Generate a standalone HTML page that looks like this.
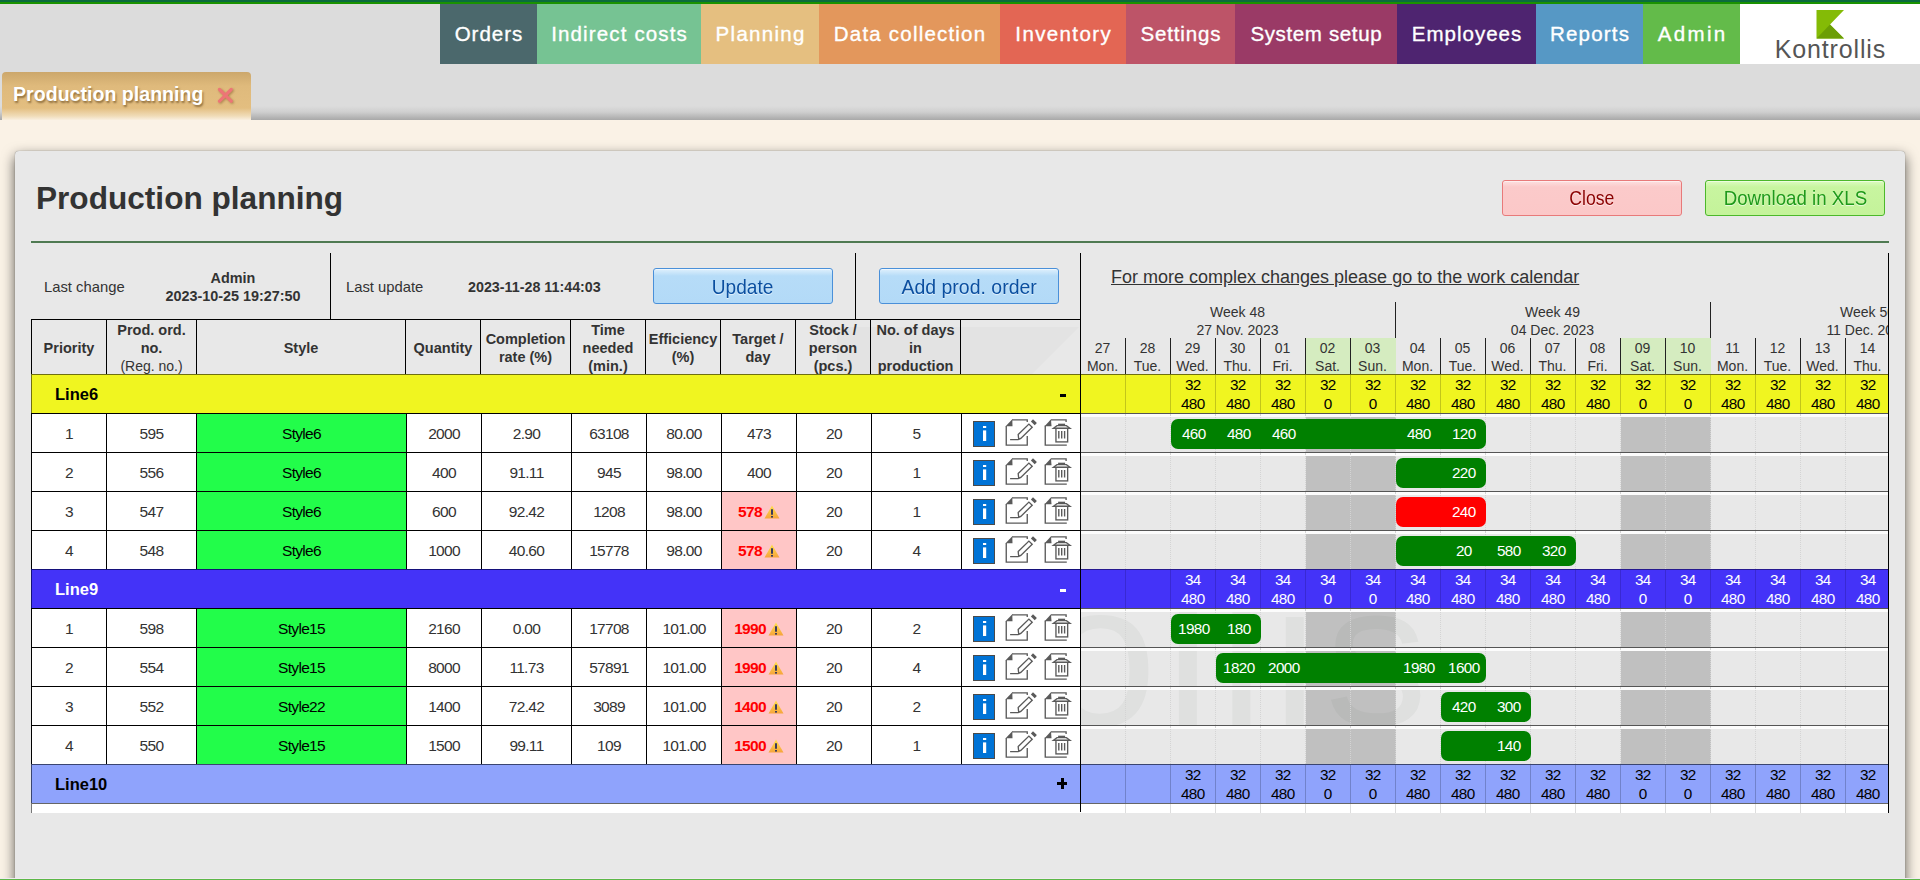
<!DOCTYPE html><html><head><meta charset="utf-8"><style>
*{margin:0;padding:0;box-sizing:border-box}
html,body{width:1920px;height:880px;overflow:hidden;background:#faf2e6;font-family:"Liberation Sans", sans-serif;color:#333}
.a{position:absolute}
.mi{position:absolute;top:4px;height:60px;color:#fff;font-size:20.5px;line-height:60px;-webkit-text-stroke:0.35px #fff;text-align:center;white-space:nowrap}
.hc{position:absolute;text-align:center;font-weight:bold;font-size:14.5px;line-height:18px;color:#333;white-space:nowrap}
.c{position:absolute;text-align:center;font-size:15.5px;letter-spacing:-0.7px;color:#333;white-space:nowrap}
.vl{position:absolute;width:1px;background:#000}
.hl{position:absolute;height:1px;background:#000}
.cal{position:absolute;text-align:center;font-size:14px;line-height:19px;white-space:nowrap}
.bar{position:absolute;height:30px;border-radius:7px;background:#008000}
.bn{position:absolute;top:0;width:45px;text-align:center;color:#fff;font-size:15.3px;letter-spacing:-0.6px;padding-left:0.6px;line-height:30px}
.ln{position:absolute;text-align:center;font-size:15.3px;letter-spacing:-0.6px;padding-left:0.6px;line-height:19px;white-space:nowrap}
</style></head><body>

<div class="a" style="left:0;top:0;width:1920px;height:120px;background:linear-gradient(#dcdcdc 0,#dcdcdc 106px,#cfcfcf 112px,#a8a8a8 120px)"></div>
<div class="a" style="left:0;top:0;width:1920px;height:4px;background:linear-gradient(#0b6a3e 0,#0b6a3e 1.5px,#1a9200 2.5px,#1a9200 4px)"></div>
<div class="mi" style="left:440px;width:97px;background:#4b686c;letter-spacing:1.0px;padding-left:1.0px">Orders</div>
<div class="mi" style="left:537px;width:164px;background:#76c393;letter-spacing:1.15px;padding-left:1.15px">Indirect costs</div>
<div class="mi" style="left:701px;width:118px;background:#e5bf80;letter-spacing:1.29px;padding-left:1.29px">Planning</div>
<div class="mi" style="left:819px;width:181px;background:#e3975c;letter-spacing:1.2px;padding-left:1.2px">Data collection</div>
<div class="mi" style="left:1000px;width:126px;background:#e36654;letter-spacing:1.37px;padding-left:1.37px">Inventory</div>
<div class="mi" style="left:1126px;width:109px;background:#bd5468;letter-spacing:0.86px;padding-left:0.86px">Settings</div>
<div class="mi" style="left:1235px;width:162px;background:#9a3a66;letter-spacing:0.64px;padding-left:0.64px">System setup</div>
<div class="mi" style="left:1397px;width:139px;background:#4e2470;letter-spacing:1.0px;padding-left:1.0px">Employees</div>
<div class="mi" style="left:1536px;width:107px;background:#5698c5;letter-spacing:1.17px;padding-left:1.17px">Reports</div>
<div class="mi" style="left:1643px;width:97px;background:#63bb4a;letter-spacing:2.35px;padding-left:2.35px">Admin</div>
<div class="a" style="left:1740px;top:4px;width:180px;height:60px;background:#fff"></div>
<svg class="a" style="left:1815px;top:10px" width="30" height="30" viewBox="0 0 30 30">
<polygon points="1.5,0 29,0 15,14.5 29,28.5 1.5,28.5" fill="#84bb06"/>
<polygon points="1.5,28.5 15,14.5 29,28.5" fill="#6b9e05"/></svg>
<div class="a" style="left:1770px;top:35px;width:120px;text-align:center;font-size:25px;line-height:28px;color:#555;letter-spacing:0.85px;padding-left:0.85px">Kontrollis</div>
<div class="a" style="left:2px;top:72px;width:249px;height:48px;border-radius:4px 4px 0 0;background:linear-gradient(#cca76b 0,#dfba7c 14px,#e3be80 36px,#f0dcb8 44px,#f9efdf 48px)"></div>
<div class="a" style="left:13px;top:82px;font-size:19.6px;font-weight:bold;color:#fff;line-height:24px;text-shadow:1px 2px 2px rgba(90,60,20,.6)">Production planning</div>
<svg class="a" style="left:216px;top:86px" width="20" height="20" viewBox="0 0 20 20"><g stroke="#ec7676" stroke-width="3.2" stroke-linecap="round" style="filter:drop-shadow(1px 1px 1px rgba(120,80,30,.5))"><line x1="3.5" y1="3.5" x2="15.2" y2="15.2"/><line x1="15.2" y1="3.5" x2="3.5" y2="15.2"/></g></svg>
<div class="a" style="left:15px;top:151px;width:1890px;height:760px;background:#e8e8e8;border-radius:4px;box-shadow:0 0 1px rgba(0,0,0,.5),0 5px 13px rgba(0,0,0,.65)"></div>
<div class="a" style="left:36px;top:178px;font-size:31.6px;font-weight:bold;line-height:40px;color:#333">Production planning</div>
<div class="a" style="left:1502px;top:180px;width:180px;height:36px;border:1px solid #e87a7a;border-radius:3px;background:linear-gradient(#fde0e0 0,#fbcaca 6px,#fbc8c8 100%);color:#8b0000;font-size:20.2px;line-height:34px;padding-top:0px;text-align:center;white-space:nowrap;text-shadow:0 1px 1px rgba(255,255,255,.7);box-shadow:inset 0 1px 0 rgba(255,255,255,.5)"><span style="display:inline-block;transform:scaleX(0.875)">Close</span></div>
<div class="a" style="left:1705px;top:180px;width:180px;height:36px;border:1px solid #4cb82a;border-radius:3px;background:linear-gradient(#dcfbc0 0,#c8f5a0 6px,#c4f39a 100%);color:#1f9a1a;font-size:20.2px;line-height:34px;padding-top:0px;text-align:center;white-space:nowrap;text-shadow:0 1px 1px rgba(255,255,255,.7);box-shadow:inset 0 1px 0 rgba(255,255,255,.5)"><span style="display:inline-block;transform:scaleX(0.927)">Download in XLS</span></div>
<div class="a" style="left:31px;top:241px;width:1858px;height:2px;background:#4f7a52"></div>
<div class="a" style="left:44px;top:278px;font-size:14.8px;line-height:18px;color:#333">Last change</div>
<div class="a" style="left:160px;top:269px;width:146px;text-align:center;font-size:14.4px;font-weight:bold;line-height:18px;color:#333">Admin<br>2023-10-25 19:27:50</div>
<div class="vl" style="left:330px;top:253px;height:66px"></div>
<div class="a" style="left:346px;top:278px;font-size:14.8px;line-height:18px;color:#333">Last update</div>
<div class="a" style="left:468px;top:278px;font-size:14.3px;font-weight:bold;line-height:18px;color:#333">2023-11-28 11:44:03</div>
<div class="a" style="left:653px;top:268px;width:180px;height:36px;border:1px solid #4a90d9;border-radius:3px;background:linear-gradient(#dff0fc 0,#b6dcf8 7px,#b3daf7 100%);color:#0a4fa0;font-size:20.2px;line-height:34px;padding-top:1px;text-align:center;white-space:nowrap;text-shadow:0 1px 1px rgba(255,255,255,.7);box-shadow:inset 0 1px 0 rgba(255,255,255,.5)"><span style="display:inline-block;transform:scaleX(0.945)">Update</span></div>
<div class="vl" style="left:855px;top:253px;height:66px"></div>
<div class="a" style="left:879px;top:268px;width:180px;height:36px;border:1px solid #4a90d9;border-radius:3px;background:linear-gradient(#dff0fc 0,#b6dcf8 7px,#b3daf7 100%);color:#0a4fa0;font-size:20.2px;line-height:34px;padding-top:1px;text-align:center;white-space:nowrap;text-shadow:0 1px 1px rgba(255,255,255,.7);box-shadow:inset 0 1px 0 rgba(255,255,255,.5)"><span style="display:inline-block;transform:scaleX(0.965)">Add prod. order</span></div>
<svg class="a" style="left:0;top:0" width="1100" height="380"><polygon points="837,327 1079,327 1032,374 837,374" fill="rgba(30,60,30,.025)"/></svg>
<div class="hc" style="left:32px;width:74px;top:339px">Priority</div>
<div class="hc" style="left:107px;width:89px;top:321px">Prod. ord.<br>no.<br><span style='font-weight:normal;font-size:14px'>(Reg. no.)</span></div>
<div class="hc" style="left:197px;width:208px;top:339px">Style</div>
<div class="hc" style="left:406px;width:74px;top:339px">Quantity</div>
<div class="hc" style="left:481px;width:89px;top:330px">Completion<br>rate (%)</div>
<div class="hc" style="left:571px;width:74px;top:321px">Time<br>needed<br>(min.)</div>
<div class="hc" style="left:646px;width:74px;top:330px">Efficiency<br>(%)</div>
<div class="hc" style="left:721px;width:74px;top:330px">Target /<br>day</div>
<div class="hc" style="left:796px;width:74px;top:321px">Stock /<br>person<br>(pcs.)</div>
<div class="hc" style="left:871px;width:89px;top:321px">No. of days<br>in<br>production</div>
<div class="hc" style="left:961px;width:119px;top:339px"></div>
<div class="hl" style="left:31px;top:319px;width:1050px"></div>
<div class="vl" style="left:31px;top:319px;height:55px"></div>
<div class="vl" style="left:106px;top:319px;height:55px"></div>
<div class="vl" style="left:196px;top:319px;height:55px"></div>
<div class="vl" style="left:405px;top:319px;height:55px"></div>
<div class="vl" style="left:480px;top:319px;height:55px"></div>
<div class="vl" style="left:570px;top:319px;height:55px"></div>
<div class="vl" style="left:645px;top:319px;height:55px"></div>
<div class="vl" style="left:720px;top:319px;height:55px"></div>
<div class="vl" style="left:795px;top:319px;height:55px"></div>
<div class="vl" style="left:870px;top:319px;height:55px"></div>
<div class="vl" style="left:960px;top:319px;height:55px"></div>
<div class="vl" style="left:1080px;top:319px;height:55px"></div>
<div class="a" style="left:31px;top:374px;width:1050px;height:39px;background:#f0f520"></div>
<div class="hl" style="left:31px;top:374px;width:1050px;background:#6f7010"></div>
<div class="vl" style="left:31px;top:374px;height:39px;background:#6f7010"></div>
<div class="a" style="left:55px;top:384px;font-size:16.5px;font-weight:bold;line-height:20px;color:#000">Line6</div>
<div class="a" style="left:1060px;top:394px;width:6px;height:3px;background:#000"></div>
<div class="a" style="left:31px;top:413px;width:1050px;height:39px;background:#fff"></div>
<div class="a" style="left:197px;top:413px;width:209px;height:39px;background:#22fd4a"></div>
<div class="hl" style="left:31px;top:413px;width:1050px"></div>
<div class="c" style="left:32px;width:74px;top:424px;line-height:20px;color:#333">1</div>
<div class="c" style="left:107px;width:89px;top:424px;line-height:20px;color:#333">595</div>
<div class="c" style="left:197px;width:209px;top:424px;line-height:20px;color:#000">Style6</div>
<div class="c" style="left:407px;width:74px;top:424px;line-height:20px;color:#333">2000</div>
<div class="c" style="left:482px;width:89px;top:424px;line-height:20px;color:#333">2.90</div>
<div class="c" style="left:572px;width:74px;top:424px;line-height:20px;color:#333">63108</div>
<div class="c" style="left:647px;width:74px;top:424px;line-height:20px;color:#333">80.00</div>
<div class="c" style="left:722px;width:74px;top:424px;line-height:20px;color:#333">473</div>
<div class="c" style="left:797px;width:74px;top:424px;line-height:20px;color:#333">20</div>
<div class="c" style="left:872px;width:89px;top:424px;line-height:20px;color:#333">5</div>
<svg class="a" style="left:961px;top:414px" width="120" height="38" viewBox="0 0 120 38">
<rect x="12.5" y="7.5" width="21" height="25" fill="#0073d6" stroke="#4a4a4a" stroke-width="1"/>
<rect x="22" y="12" width="3.2" height="2" fill="#fff"/><rect x="22" y="16.4" width="3.2" height="10.6" fill="#fff"/>
<g fill="none" stroke="#5a5a5a" stroke-width="1.35">
<path d="M45.25,12 V31.15 H66.25 V21.9"/><path d="M51,5.85 H66.25 V8"/>
<path d="M49.1,25.55 H57.3 Q58,25 57.5,23.5 L57.2,20.6 L67.9,10.1 L71.2,13.2 L59.8,24.4 L57.7,25.4"/>
<path d="M84.25,11.6 V31.15 H105.8"/><path d="M90,5.85 H105.1 V8"/>
<rect x="94.95" y="14.3" width="11.7" height="13.6"/>
<path d="M92.4,14.3 H109 L105.4,11.6 H96 Z"/>
<line x1="97.1" y1="10.35" x2="104.1" y2="10.35"/>
</g>
<polygon points="44.6,12.3 51.3,5.2 51.5,12.3" fill="#5a5a5a"/><polygon points="83.6,12.2 90,5.2 90.5,12.2" fill="#5a5a5a"/>
<polygon points="69.9,7.4 72,5.3 75.9,9.1 73.7,11.2" fill="#5a5a5a"/>
<g stroke="#5a5a5a" stroke-width="1.4"><line x1="97.8" y1="17" x2="97.8" y2="24.5"/><line x1="100.7" y1="17" x2="100.7" y2="24.5"/><line x1="103.6" y1="17" x2="103.6" y2="24.5"/></g>
</svg>
<div class="vl" style="left:31px;top:413px;height:39px"></div>
<div class="vl" style="left:106px;top:413px;height:39px"></div>
<div class="vl" style="left:196px;top:413px;height:39px"></div>
<div class="vl" style="left:406px;top:413px;height:39px"></div>
<div class="vl" style="left:481px;top:413px;height:39px"></div>
<div class="vl" style="left:571px;top:413px;height:39px"></div>
<div class="vl" style="left:646px;top:413px;height:39px"></div>
<div class="vl" style="left:721px;top:413px;height:39px"></div>
<div class="vl" style="left:796px;top:413px;height:39px"></div>
<div class="vl" style="left:871px;top:413px;height:39px"></div>
<div class="vl" style="left:961px;top:413px;height:39px"></div>
<div class="vl" style="left:1080px;top:413px;height:39px"></div>
<div class="a" style="left:31px;top:452px;width:1050px;height:39px;background:#fff"></div>
<div class="a" style="left:197px;top:452px;width:209px;height:39px;background:#22fd4a"></div>
<div class="hl" style="left:31px;top:452px;width:1050px"></div>
<div class="c" style="left:32px;width:74px;top:463px;line-height:20px;color:#333">2</div>
<div class="c" style="left:107px;width:89px;top:463px;line-height:20px;color:#333">556</div>
<div class="c" style="left:197px;width:209px;top:463px;line-height:20px;color:#000">Style6</div>
<div class="c" style="left:407px;width:74px;top:463px;line-height:20px;color:#333">400</div>
<div class="c" style="left:482px;width:89px;top:463px;line-height:20px;color:#333">91.11</div>
<div class="c" style="left:572px;width:74px;top:463px;line-height:20px;color:#333">945</div>
<div class="c" style="left:647px;width:74px;top:463px;line-height:20px;color:#333">98.00</div>
<div class="c" style="left:722px;width:74px;top:463px;line-height:20px;color:#333">400</div>
<div class="c" style="left:797px;width:74px;top:463px;line-height:20px;color:#333">20</div>
<div class="c" style="left:872px;width:89px;top:463px;line-height:20px;color:#333">1</div>
<svg class="a" style="left:961px;top:453px" width="120" height="38" viewBox="0 0 120 38">
<rect x="12.5" y="7.5" width="21" height="25" fill="#0073d6" stroke="#4a4a4a" stroke-width="1"/>
<rect x="22" y="12" width="3.2" height="2" fill="#fff"/><rect x="22" y="16.4" width="3.2" height="10.6" fill="#fff"/>
<g fill="none" stroke="#5a5a5a" stroke-width="1.35">
<path d="M45.25,12 V31.15 H66.25 V21.9"/><path d="M51,5.85 H66.25 V8"/>
<path d="M49.1,25.55 H57.3 Q58,25 57.5,23.5 L57.2,20.6 L67.9,10.1 L71.2,13.2 L59.8,24.4 L57.7,25.4"/>
<path d="M84.25,11.6 V31.15 H105.8"/><path d="M90,5.85 H105.1 V8"/>
<rect x="94.95" y="14.3" width="11.7" height="13.6"/>
<path d="M92.4,14.3 H109 L105.4,11.6 H96 Z"/>
<line x1="97.1" y1="10.35" x2="104.1" y2="10.35"/>
</g>
<polygon points="44.6,12.3 51.3,5.2 51.5,12.3" fill="#5a5a5a"/><polygon points="83.6,12.2 90,5.2 90.5,12.2" fill="#5a5a5a"/>
<polygon points="69.9,7.4 72,5.3 75.9,9.1 73.7,11.2" fill="#5a5a5a"/>
<g stroke="#5a5a5a" stroke-width="1.4"><line x1="97.8" y1="17" x2="97.8" y2="24.5"/><line x1="100.7" y1="17" x2="100.7" y2="24.5"/><line x1="103.6" y1="17" x2="103.6" y2="24.5"/></g>
</svg>
<div class="vl" style="left:31px;top:452px;height:39px"></div>
<div class="vl" style="left:106px;top:452px;height:39px"></div>
<div class="vl" style="left:196px;top:452px;height:39px"></div>
<div class="vl" style="left:406px;top:452px;height:39px"></div>
<div class="vl" style="left:481px;top:452px;height:39px"></div>
<div class="vl" style="left:571px;top:452px;height:39px"></div>
<div class="vl" style="left:646px;top:452px;height:39px"></div>
<div class="vl" style="left:721px;top:452px;height:39px"></div>
<div class="vl" style="left:796px;top:452px;height:39px"></div>
<div class="vl" style="left:871px;top:452px;height:39px"></div>
<div class="vl" style="left:961px;top:452px;height:39px"></div>
<div class="vl" style="left:1080px;top:452px;height:39px"></div>
<div class="a" style="left:31px;top:491px;width:1050px;height:39px;background:#fff"></div>
<div class="a" style="left:197px;top:491px;width:209px;height:39px;background:#22fd4a"></div>
<div class="a" style="left:722px;top:491px;width:74px;height:39px;background:#ffc6c6"></div>
<div class="hl" style="left:31px;top:491px;width:1050px"></div>
<div class="c" style="left:32px;width:74px;top:502px;line-height:20px;color:#333">3</div>
<div class="c" style="left:107px;width:89px;top:502px;line-height:20px;color:#333">547</div>
<div class="c" style="left:197px;width:209px;top:502px;line-height:20px;color:#000">Style6</div>
<div class="c" style="left:407px;width:74px;top:502px;line-height:20px;color:#333">600</div>
<div class="c" style="left:482px;width:89px;top:502px;line-height:20px;color:#333">92.42</div>
<div class="c" style="left:572px;width:74px;top:502px;line-height:20px;color:#333">1208</div>
<div class="c" style="left:647px;width:74px;top:502px;line-height:20px;color:#333">98.00</div>
<div class="c" style="left:722px;width:74px;top:502px;line-height:20px;color:#333"><b style="color:#f00">578</b><svg width="16" height="14" viewBox="0 0 16 14" style="vertical-align:-2px;margin-left:2px"><defs><linearGradient id="wg" x1="0" y1="0" x2="0" y2="1"><stop offset="0" stop-color="#ffe04a"/><stop offset="1" stop-color="#f6a43c"/></linearGradient></defs><polygon points="8,0.5 15.5,13.5 0.5,13.5" fill="url(#wg)"/><rect x="7" y="4" width="2" height="6" rx="1" fill="#3b3b5c"/><rect x="7" y="11" width="2" height="1.6" fill="#3b3b5c"/></svg></div>
<div class="c" style="left:797px;width:74px;top:502px;line-height:20px;color:#333">20</div>
<div class="c" style="left:872px;width:89px;top:502px;line-height:20px;color:#333">1</div>
<svg class="a" style="left:961px;top:492px" width="120" height="38" viewBox="0 0 120 38">
<rect x="12.5" y="7.5" width="21" height="25" fill="#0073d6" stroke="#4a4a4a" stroke-width="1"/>
<rect x="22" y="12" width="3.2" height="2" fill="#fff"/><rect x="22" y="16.4" width="3.2" height="10.6" fill="#fff"/>
<g fill="none" stroke="#5a5a5a" stroke-width="1.35">
<path d="M45.25,12 V31.15 H66.25 V21.9"/><path d="M51,5.85 H66.25 V8"/>
<path d="M49.1,25.55 H57.3 Q58,25 57.5,23.5 L57.2,20.6 L67.9,10.1 L71.2,13.2 L59.8,24.4 L57.7,25.4"/>
<path d="M84.25,11.6 V31.15 H105.8"/><path d="M90,5.85 H105.1 V8"/>
<rect x="94.95" y="14.3" width="11.7" height="13.6"/>
<path d="M92.4,14.3 H109 L105.4,11.6 H96 Z"/>
<line x1="97.1" y1="10.35" x2="104.1" y2="10.35"/>
</g>
<polygon points="44.6,12.3 51.3,5.2 51.5,12.3" fill="#5a5a5a"/><polygon points="83.6,12.2 90,5.2 90.5,12.2" fill="#5a5a5a"/>
<polygon points="69.9,7.4 72,5.3 75.9,9.1 73.7,11.2" fill="#5a5a5a"/>
<g stroke="#5a5a5a" stroke-width="1.4"><line x1="97.8" y1="17" x2="97.8" y2="24.5"/><line x1="100.7" y1="17" x2="100.7" y2="24.5"/><line x1="103.6" y1="17" x2="103.6" y2="24.5"/></g>
</svg>
<div class="vl" style="left:31px;top:491px;height:39px"></div>
<div class="vl" style="left:106px;top:491px;height:39px"></div>
<div class="vl" style="left:196px;top:491px;height:39px"></div>
<div class="vl" style="left:406px;top:491px;height:39px"></div>
<div class="vl" style="left:481px;top:491px;height:39px"></div>
<div class="vl" style="left:571px;top:491px;height:39px"></div>
<div class="vl" style="left:646px;top:491px;height:39px"></div>
<div class="vl" style="left:721px;top:491px;height:39px"></div>
<div class="vl" style="left:796px;top:491px;height:39px"></div>
<div class="vl" style="left:871px;top:491px;height:39px"></div>
<div class="vl" style="left:961px;top:491px;height:39px"></div>
<div class="vl" style="left:1080px;top:491px;height:39px"></div>
<div class="a" style="left:31px;top:530px;width:1050px;height:39px;background:#fff"></div>
<div class="a" style="left:197px;top:530px;width:209px;height:39px;background:#22fd4a"></div>
<div class="a" style="left:722px;top:530px;width:74px;height:39px;background:#ffc6c6"></div>
<div class="hl" style="left:31px;top:530px;width:1050px"></div>
<div class="c" style="left:32px;width:74px;top:541px;line-height:20px;color:#333">4</div>
<div class="c" style="left:107px;width:89px;top:541px;line-height:20px;color:#333">548</div>
<div class="c" style="left:197px;width:209px;top:541px;line-height:20px;color:#000">Style6</div>
<div class="c" style="left:407px;width:74px;top:541px;line-height:20px;color:#333">1000</div>
<div class="c" style="left:482px;width:89px;top:541px;line-height:20px;color:#333">40.60</div>
<div class="c" style="left:572px;width:74px;top:541px;line-height:20px;color:#333">15778</div>
<div class="c" style="left:647px;width:74px;top:541px;line-height:20px;color:#333">98.00</div>
<div class="c" style="left:722px;width:74px;top:541px;line-height:20px;color:#333"><b style="color:#f00">578</b><svg width="16" height="14" viewBox="0 0 16 14" style="vertical-align:-2px;margin-left:2px"><defs><linearGradient id="wg" x1="0" y1="0" x2="0" y2="1"><stop offset="0" stop-color="#ffe04a"/><stop offset="1" stop-color="#f6a43c"/></linearGradient></defs><polygon points="8,0.5 15.5,13.5 0.5,13.5" fill="url(#wg)"/><rect x="7" y="4" width="2" height="6" rx="1" fill="#3b3b5c"/><rect x="7" y="11" width="2" height="1.6" fill="#3b3b5c"/></svg></div>
<div class="c" style="left:797px;width:74px;top:541px;line-height:20px;color:#333">20</div>
<div class="c" style="left:872px;width:89px;top:541px;line-height:20px;color:#333">4</div>
<svg class="a" style="left:961px;top:531px" width="120" height="38" viewBox="0 0 120 38">
<rect x="12.5" y="7.5" width="21" height="25" fill="#0073d6" stroke="#4a4a4a" stroke-width="1"/>
<rect x="22" y="12" width="3.2" height="2" fill="#fff"/><rect x="22" y="16.4" width="3.2" height="10.6" fill="#fff"/>
<g fill="none" stroke="#5a5a5a" stroke-width="1.35">
<path d="M45.25,12 V31.15 H66.25 V21.9"/><path d="M51,5.85 H66.25 V8"/>
<path d="M49.1,25.55 H57.3 Q58,25 57.5,23.5 L57.2,20.6 L67.9,10.1 L71.2,13.2 L59.8,24.4 L57.7,25.4"/>
<path d="M84.25,11.6 V31.15 H105.8"/><path d="M90,5.85 H105.1 V8"/>
<rect x="94.95" y="14.3" width="11.7" height="13.6"/>
<path d="M92.4,14.3 H109 L105.4,11.6 H96 Z"/>
<line x1="97.1" y1="10.35" x2="104.1" y2="10.35"/>
</g>
<polygon points="44.6,12.3 51.3,5.2 51.5,12.3" fill="#5a5a5a"/><polygon points="83.6,12.2 90,5.2 90.5,12.2" fill="#5a5a5a"/>
<polygon points="69.9,7.4 72,5.3 75.9,9.1 73.7,11.2" fill="#5a5a5a"/>
<g stroke="#5a5a5a" stroke-width="1.4"><line x1="97.8" y1="17" x2="97.8" y2="24.5"/><line x1="100.7" y1="17" x2="100.7" y2="24.5"/><line x1="103.6" y1="17" x2="103.6" y2="24.5"/></g>
</svg>
<div class="vl" style="left:31px;top:530px;height:39px"></div>
<div class="vl" style="left:106px;top:530px;height:39px"></div>
<div class="vl" style="left:196px;top:530px;height:39px"></div>
<div class="vl" style="left:406px;top:530px;height:39px"></div>
<div class="vl" style="left:481px;top:530px;height:39px"></div>
<div class="vl" style="left:571px;top:530px;height:39px"></div>
<div class="vl" style="left:646px;top:530px;height:39px"></div>
<div class="vl" style="left:721px;top:530px;height:39px"></div>
<div class="vl" style="left:796px;top:530px;height:39px"></div>
<div class="vl" style="left:871px;top:530px;height:39px"></div>
<div class="vl" style="left:961px;top:530px;height:39px"></div>
<div class="vl" style="left:1080px;top:530px;height:39px"></div>
<div class="a" style="left:31px;top:569px;width:1050px;height:39px;background:#4433f8"></div>
<div class="hl" style="left:31px;top:569px;width:1050px;background:#14107a"></div>
<div class="vl" style="left:31px;top:569px;height:39px;background:#14107a"></div>
<div class="a" style="left:55px;top:579px;font-size:16.5px;font-weight:bold;line-height:20px;color:#fff">Line9</div>
<div class="a" style="left:1060px;top:589px;width:6px;height:3px;background:#fff"></div>
<div class="a" style="left:31px;top:608px;width:1050px;height:39px;background:#fff"></div>
<div class="a" style="left:197px;top:608px;width:209px;height:39px;background:#22fd4a"></div>
<div class="a" style="left:722px;top:608px;width:74px;height:39px;background:#ffc6c6"></div>
<div class="hl" style="left:31px;top:608px;width:1050px"></div>
<div class="c" style="left:32px;width:74px;top:619px;line-height:20px;color:#333">1</div>
<div class="c" style="left:107px;width:89px;top:619px;line-height:20px;color:#333">598</div>
<div class="c" style="left:197px;width:209px;top:619px;line-height:20px;color:#000">Style15</div>
<div class="c" style="left:407px;width:74px;top:619px;line-height:20px;color:#333">2160</div>
<div class="c" style="left:482px;width:89px;top:619px;line-height:20px;color:#333">0.00</div>
<div class="c" style="left:572px;width:74px;top:619px;line-height:20px;color:#333">17708</div>
<div class="c" style="left:647px;width:74px;top:619px;line-height:20px;color:#333">101.00</div>
<div class="c" style="left:722px;width:74px;top:619px;line-height:20px;color:#333"><b style="color:#f00">1990</b><svg width="16" height="14" viewBox="0 0 16 14" style="vertical-align:-2px;margin-left:2px"><defs><linearGradient id="wg" x1="0" y1="0" x2="0" y2="1"><stop offset="0" stop-color="#ffe04a"/><stop offset="1" stop-color="#f6a43c"/></linearGradient></defs><polygon points="8,0.5 15.5,13.5 0.5,13.5" fill="url(#wg)"/><rect x="7" y="4" width="2" height="6" rx="1" fill="#3b3b5c"/><rect x="7" y="11" width="2" height="1.6" fill="#3b3b5c"/></svg></div>
<div class="c" style="left:797px;width:74px;top:619px;line-height:20px;color:#333">20</div>
<div class="c" style="left:872px;width:89px;top:619px;line-height:20px;color:#333">2</div>
<svg class="a" style="left:961px;top:609px" width="120" height="38" viewBox="0 0 120 38">
<rect x="12.5" y="7.5" width="21" height="25" fill="#0073d6" stroke="#4a4a4a" stroke-width="1"/>
<rect x="22" y="12" width="3.2" height="2" fill="#fff"/><rect x="22" y="16.4" width="3.2" height="10.6" fill="#fff"/>
<g fill="none" stroke="#5a5a5a" stroke-width="1.35">
<path d="M45.25,12 V31.15 H66.25 V21.9"/><path d="M51,5.85 H66.25 V8"/>
<path d="M49.1,25.55 H57.3 Q58,25 57.5,23.5 L57.2,20.6 L67.9,10.1 L71.2,13.2 L59.8,24.4 L57.7,25.4"/>
<path d="M84.25,11.6 V31.15 H105.8"/><path d="M90,5.85 H105.1 V8"/>
<rect x="94.95" y="14.3" width="11.7" height="13.6"/>
<path d="M92.4,14.3 H109 L105.4,11.6 H96 Z"/>
<line x1="97.1" y1="10.35" x2="104.1" y2="10.35"/>
</g>
<polygon points="44.6,12.3 51.3,5.2 51.5,12.3" fill="#5a5a5a"/><polygon points="83.6,12.2 90,5.2 90.5,12.2" fill="#5a5a5a"/>
<polygon points="69.9,7.4 72,5.3 75.9,9.1 73.7,11.2" fill="#5a5a5a"/>
<g stroke="#5a5a5a" stroke-width="1.4"><line x1="97.8" y1="17" x2="97.8" y2="24.5"/><line x1="100.7" y1="17" x2="100.7" y2="24.5"/><line x1="103.6" y1="17" x2="103.6" y2="24.5"/></g>
</svg>
<div class="vl" style="left:31px;top:608px;height:39px"></div>
<div class="vl" style="left:106px;top:608px;height:39px"></div>
<div class="vl" style="left:196px;top:608px;height:39px"></div>
<div class="vl" style="left:406px;top:608px;height:39px"></div>
<div class="vl" style="left:481px;top:608px;height:39px"></div>
<div class="vl" style="left:571px;top:608px;height:39px"></div>
<div class="vl" style="left:646px;top:608px;height:39px"></div>
<div class="vl" style="left:721px;top:608px;height:39px"></div>
<div class="vl" style="left:796px;top:608px;height:39px"></div>
<div class="vl" style="left:871px;top:608px;height:39px"></div>
<div class="vl" style="left:961px;top:608px;height:39px"></div>
<div class="vl" style="left:1080px;top:608px;height:39px"></div>
<div class="a" style="left:31px;top:647px;width:1050px;height:39px;background:#fff"></div>
<div class="a" style="left:197px;top:647px;width:209px;height:39px;background:#22fd4a"></div>
<div class="a" style="left:722px;top:647px;width:74px;height:39px;background:#ffc6c6"></div>
<div class="hl" style="left:31px;top:647px;width:1050px"></div>
<div class="c" style="left:32px;width:74px;top:658px;line-height:20px;color:#333">2</div>
<div class="c" style="left:107px;width:89px;top:658px;line-height:20px;color:#333">554</div>
<div class="c" style="left:197px;width:209px;top:658px;line-height:20px;color:#000">Style15</div>
<div class="c" style="left:407px;width:74px;top:658px;line-height:20px;color:#333">8000</div>
<div class="c" style="left:482px;width:89px;top:658px;line-height:20px;color:#333">11.73</div>
<div class="c" style="left:572px;width:74px;top:658px;line-height:20px;color:#333">57891</div>
<div class="c" style="left:647px;width:74px;top:658px;line-height:20px;color:#333">101.00</div>
<div class="c" style="left:722px;width:74px;top:658px;line-height:20px;color:#333"><b style="color:#f00">1990</b><svg width="16" height="14" viewBox="0 0 16 14" style="vertical-align:-2px;margin-left:2px"><defs><linearGradient id="wg" x1="0" y1="0" x2="0" y2="1"><stop offset="0" stop-color="#ffe04a"/><stop offset="1" stop-color="#f6a43c"/></linearGradient></defs><polygon points="8,0.5 15.5,13.5 0.5,13.5" fill="url(#wg)"/><rect x="7" y="4" width="2" height="6" rx="1" fill="#3b3b5c"/><rect x="7" y="11" width="2" height="1.6" fill="#3b3b5c"/></svg></div>
<div class="c" style="left:797px;width:74px;top:658px;line-height:20px;color:#333">20</div>
<div class="c" style="left:872px;width:89px;top:658px;line-height:20px;color:#333">4</div>
<svg class="a" style="left:961px;top:648px" width="120" height="38" viewBox="0 0 120 38">
<rect x="12.5" y="7.5" width="21" height="25" fill="#0073d6" stroke="#4a4a4a" stroke-width="1"/>
<rect x="22" y="12" width="3.2" height="2" fill="#fff"/><rect x="22" y="16.4" width="3.2" height="10.6" fill="#fff"/>
<g fill="none" stroke="#5a5a5a" stroke-width="1.35">
<path d="M45.25,12 V31.15 H66.25 V21.9"/><path d="M51,5.85 H66.25 V8"/>
<path d="M49.1,25.55 H57.3 Q58,25 57.5,23.5 L57.2,20.6 L67.9,10.1 L71.2,13.2 L59.8,24.4 L57.7,25.4"/>
<path d="M84.25,11.6 V31.15 H105.8"/><path d="M90,5.85 H105.1 V8"/>
<rect x="94.95" y="14.3" width="11.7" height="13.6"/>
<path d="M92.4,14.3 H109 L105.4,11.6 H96 Z"/>
<line x1="97.1" y1="10.35" x2="104.1" y2="10.35"/>
</g>
<polygon points="44.6,12.3 51.3,5.2 51.5,12.3" fill="#5a5a5a"/><polygon points="83.6,12.2 90,5.2 90.5,12.2" fill="#5a5a5a"/>
<polygon points="69.9,7.4 72,5.3 75.9,9.1 73.7,11.2" fill="#5a5a5a"/>
<g stroke="#5a5a5a" stroke-width="1.4"><line x1="97.8" y1="17" x2="97.8" y2="24.5"/><line x1="100.7" y1="17" x2="100.7" y2="24.5"/><line x1="103.6" y1="17" x2="103.6" y2="24.5"/></g>
</svg>
<div class="vl" style="left:31px;top:647px;height:39px"></div>
<div class="vl" style="left:106px;top:647px;height:39px"></div>
<div class="vl" style="left:196px;top:647px;height:39px"></div>
<div class="vl" style="left:406px;top:647px;height:39px"></div>
<div class="vl" style="left:481px;top:647px;height:39px"></div>
<div class="vl" style="left:571px;top:647px;height:39px"></div>
<div class="vl" style="left:646px;top:647px;height:39px"></div>
<div class="vl" style="left:721px;top:647px;height:39px"></div>
<div class="vl" style="left:796px;top:647px;height:39px"></div>
<div class="vl" style="left:871px;top:647px;height:39px"></div>
<div class="vl" style="left:961px;top:647px;height:39px"></div>
<div class="vl" style="left:1080px;top:647px;height:39px"></div>
<div class="a" style="left:31px;top:686px;width:1050px;height:39px;background:#fff"></div>
<div class="a" style="left:197px;top:686px;width:209px;height:39px;background:#22fd4a"></div>
<div class="a" style="left:722px;top:686px;width:74px;height:39px;background:#ffc6c6"></div>
<div class="hl" style="left:31px;top:686px;width:1050px"></div>
<div class="c" style="left:32px;width:74px;top:697px;line-height:20px;color:#333">3</div>
<div class="c" style="left:107px;width:89px;top:697px;line-height:20px;color:#333">552</div>
<div class="c" style="left:197px;width:209px;top:697px;line-height:20px;color:#000">Style22</div>
<div class="c" style="left:407px;width:74px;top:697px;line-height:20px;color:#333">1400</div>
<div class="c" style="left:482px;width:89px;top:697px;line-height:20px;color:#333">72.42</div>
<div class="c" style="left:572px;width:74px;top:697px;line-height:20px;color:#333">3089</div>
<div class="c" style="left:647px;width:74px;top:697px;line-height:20px;color:#333">101.00</div>
<div class="c" style="left:722px;width:74px;top:697px;line-height:20px;color:#333"><b style="color:#f00">1400</b><svg width="16" height="14" viewBox="0 0 16 14" style="vertical-align:-2px;margin-left:2px"><defs><linearGradient id="wg" x1="0" y1="0" x2="0" y2="1"><stop offset="0" stop-color="#ffe04a"/><stop offset="1" stop-color="#f6a43c"/></linearGradient></defs><polygon points="8,0.5 15.5,13.5 0.5,13.5" fill="url(#wg)"/><rect x="7" y="4" width="2" height="6" rx="1" fill="#3b3b5c"/><rect x="7" y="11" width="2" height="1.6" fill="#3b3b5c"/></svg></div>
<div class="c" style="left:797px;width:74px;top:697px;line-height:20px;color:#333">20</div>
<div class="c" style="left:872px;width:89px;top:697px;line-height:20px;color:#333">2</div>
<svg class="a" style="left:961px;top:687px" width="120" height="38" viewBox="0 0 120 38">
<rect x="12.5" y="7.5" width="21" height="25" fill="#0073d6" stroke="#4a4a4a" stroke-width="1"/>
<rect x="22" y="12" width="3.2" height="2" fill="#fff"/><rect x="22" y="16.4" width="3.2" height="10.6" fill="#fff"/>
<g fill="none" stroke="#5a5a5a" stroke-width="1.35">
<path d="M45.25,12 V31.15 H66.25 V21.9"/><path d="M51,5.85 H66.25 V8"/>
<path d="M49.1,25.55 H57.3 Q58,25 57.5,23.5 L57.2,20.6 L67.9,10.1 L71.2,13.2 L59.8,24.4 L57.7,25.4"/>
<path d="M84.25,11.6 V31.15 H105.8"/><path d="M90,5.85 H105.1 V8"/>
<rect x="94.95" y="14.3" width="11.7" height="13.6"/>
<path d="M92.4,14.3 H109 L105.4,11.6 H96 Z"/>
<line x1="97.1" y1="10.35" x2="104.1" y2="10.35"/>
</g>
<polygon points="44.6,12.3 51.3,5.2 51.5,12.3" fill="#5a5a5a"/><polygon points="83.6,12.2 90,5.2 90.5,12.2" fill="#5a5a5a"/>
<polygon points="69.9,7.4 72,5.3 75.9,9.1 73.7,11.2" fill="#5a5a5a"/>
<g stroke="#5a5a5a" stroke-width="1.4"><line x1="97.8" y1="17" x2="97.8" y2="24.5"/><line x1="100.7" y1="17" x2="100.7" y2="24.5"/><line x1="103.6" y1="17" x2="103.6" y2="24.5"/></g>
</svg>
<div class="vl" style="left:31px;top:686px;height:39px"></div>
<div class="vl" style="left:106px;top:686px;height:39px"></div>
<div class="vl" style="left:196px;top:686px;height:39px"></div>
<div class="vl" style="left:406px;top:686px;height:39px"></div>
<div class="vl" style="left:481px;top:686px;height:39px"></div>
<div class="vl" style="left:571px;top:686px;height:39px"></div>
<div class="vl" style="left:646px;top:686px;height:39px"></div>
<div class="vl" style="left:721px;top:686px;height:39px"></div>
<div class="vl" style="left:796px;top:686px;height:39px"></div>
<div class="vl" style="left:871px;top:686px;height:39px"></div>
<div class="vl" style="left:961px;top:686px;height:39px"></div>
<div class="vl" style="left:1080px;top:686px;height:39px"></div>
<div class="a" style="left:31px;top:725px;width:1050px;height:39px;background:#fff"></div>
<div class="a" style="left:197px;top:725px;width:209px;height:39px;background:#22fd4a"></div>
<div class="a" style="left:722px;top:725px;width:74px;height:39px;background:#ffc6c6"></div>
<div class="hl" style="left:31px;top:725px;width:1050px"></div>
<div class="c" style="left:32px;width:74px;top:736px;line-height:20px;color:#333">4</div>
<div class="c" style="left:107px;width:89px;top:736px;line-height:20px;color:#333">550</div>
<div class="c" style="left:197px;width:209px;top:736px;line-height:20px;color:#000">Style15</div>
<div class="c" style="left:407px;width:74px;top:736px;line-height:20px;color:#333">1500</div>
<div class="c" style="left:482px;width:89px;top:736px;line-height:20px;color:#333">99.11</div>
<div class="c" style="left:572px;width:74px;top:736px;line-height:20px;color:#333">109</div>
<div class="c" style="left:647px;width:74px;top:736px;line-height:20px;color:#333">101.00</div>
<div class="c" style="left:722px;width:74px;top:736px;line-height:20px;color:#333"><b style="color:#f00">1500</b><svg width="16" height="14" viewBox="0 0 16 14" style="vertical-align:-2px;margin-left:2px"><defs><linearGradient id="wg" x1="0" y1="0" x2="0" y2="1"><stop offset="0" stop-color="#ffe04a"/><stop offset="1" stop-color="#f6a43c"/></linearGradient></defs><polygon points="8,0.5 15.5,13.5 0.5,13.5" fill="url(#wg)"/><rect x="7" y="4" width="2" height="6" rx="1" fill="#3b3b5c"/><rect x="7" y="11" width="2" height="1.6" fill="#3b3b5c"/></svg></div>
<div class="c" style="left:797px;width:74px;top:736px;line-height:20px;color:#333">20</div>
<div class="c" style="left:872px;width:89px;top:736px;line-height:20px;color:#333">1</div>
<svg class="a" style="left:961px;top:726px" width="120" height="38" viewBox="0 0 120 38">
<rect x="12.5" y="7.5" width="21" height="25" fill="#0073d6" stroke="#4a4a4a" stroke-width="1"/>
<rect x="22" y="12" width="3.2" height="2" fill="#fff"/><rect x="22" y="16.4" width="3.2" height="10.6" fill="#fff"/>
<g fill="none" stroke="#5a5a5a" stroke-width="1.35">
<path d="M45.25,12 V31.15 H66.25 V21.9"/><path d="M51,5.85 H66.25 V8"/>
<path d="M49.1,25.55 H57.3 Q58,25 57.5,23.5 L57.2,20.6 L67.9,10.1 L71.2,13.2 L59.8,24.4 L57.7,25.4"/>
<path d="M84.25,11.6 V31.15 H105.8"/><path d="M90,5.85 H105.1 V8"/>
<rect x="94.95" y="14.3" width="11.7" height="13.6"/>
<path d="M92.4,14.3 H109 L105.4,11.6 H96 Z"/>
<line x1="97.1" y1="10.35" x2="104.1" y2="10.35"/>
</g>
<polygon points="44.6,12.3 51.3,5.2 51.5,12.3" fill="#5a5a5a"/><polygon points="83.6,12.2 90,5.2 90.5,12.2" fill="#5a5a5a"/>
<polygon points="69.9,7.4 72,5.3 75.9,9.1 73.7,11.2" fill="#5a5a5a"/>
<g stroke="#5a5a5a" stroke-width="1.4"><line x1="97.8" y1="17" x2="97.8" y2="24.5"/><line x1="100.7" y1="17" x2="100.7" y2="24.5"/><line x1="103.6" y1="17" x2="103.6" y2="24.5"/></g>
</svg>
<div class="vl" style="left:31px;top:725px;height:39px"></div>
<div class="vl" style="left:106px;top:725px;height:39px"></div>
<div class="vl" style="left:196px;top:725px;height:39px"></div>
<div class="vl" style="left:406px;top:725px;height:39px"></div>
<div class="vl" style="left:481px;top:725px;height:39px"></div>
<div class="vl" style="left:571px;top:725px;height:39px"></div>
<div class="vl" style="left:646px;top:725px;height:39px"></div>
<div class="vl" style="left:721px;top:725px;height:39px"></div>
<div class="vl" style="left:796px;top:725px;height:39px"></div>
<div class="vl" style="left:871px;top:725px;height:39px"></div>
<div class="vl" style="left:961px;top:725px;height:39px"></div>
<div class="vl" style="left:1080px;top:725px;height:39px"></div>
<div class="a" style="left:31px;top:764px;width:1050px;height:39px;background:#8fa3fc"></div>
<div class="hl" style="left:31px;top:764px;width:1050px;background:#3a4570"></div>
<div class="vl" style="left:31px;top:764px;height:39px;background:#3a4570"></div>
<div class="a" style="left:55px;top:774px;font-size:16.5px;font-weight:bold;line-height:20px;color:#000">Line10</div>
<div class="a" style="left:1057px;top:782px;width:10px;height:3px;background:#000"></div>
<div class="a" style="left:1061px;top:778px;width:2.5px;height:11px;background:#000"></div>
<div class="hl" style="left:31px;top:803px;width:1050px;background:#666"></div>
<div class="a" style="left:31px;top:804px;width:1050px;height:9px;background:#fff"></div>
<div class="vl" style="left:31px;top:803px;height:10px;background:#777"></div>
<div class="vl" style="left:1080px;top:253px;height:559px"></div>
<div class="a" style="left:1081px;top:253px;width:808px;height:560px;overflow:hidden">
<div class="a" style="left:30px;top:13px;font-size:18px;line-height:22px;color:#333;text-decoration:underline;white-space:nowrap">For more complex changes please go to the work calendar</div>
<div class="cal" style="left:-1px;top:50px;width:315px;line-height:18px;color:#333">Week 48<br>27 Nov. 2023</div>
<div class="cal" style="left:314px;top:50px;width:315px;line-height:18px;color:#333">Week 49<br>04 Dec. 2023</div>
<div class="a" style="left:314px;top:49px;width:1px;height:72px;background:#222"></div>
<div class="cal" style="left:629px;top:50px;width:315px;line-height:18px;color:#333">Week 50<br>11 Dec. 2023</div>
<div class="a" style="left:629px;top:49px;width:1px;height:72px;background:#222"></div>
<div class="cal" style="left:-1px;top:86px;width:45px;line-height:18px;color:#333">27<br>Mon.</div>
<div class="cal" style="left:44px;top:86px;width:45px;line-height:18px;color:#333">28<br>Tue.</div>
<div class="a" style="left:44px;top:85px;width:1px;height:36px;background:#222"></div>
<div class="cal" style="left:89px;top:86px;width:45px;line-height:18px;color:#333">29<br>Wed.</div>
<div class="a" style="left:89px;top:85px;width:1px;height:36px;background:#222"></div>
<div class="cal" style="left:134px;top:86px;width:45px;line-height:18px;color:#333">30<br>Thu.</div>
<div class="a" style="left:134px;top:85px;width:1px;height:36px;background:#222"></div>
<div class="cal" style="left:179px;top:86px;width:45px;line-height:18px;color:#333">01<br>Fri.</div>
<div class="a" style="left:179px;top:85px;width:1px;height:36px;background:#222"></div>
<div class="a" style="left:225px;top:85px;width:45px;height:36px;background:#d5ecc0"></div>
<div class="cal" style="left:224px;top:86px;width:45px;line-height:18px;color:#333">02<br>Sat.</div>
<div class="a" style="left:224px;top:85px;width:1px;height:36px;background:#222"></div>
<div class="a" style="left:270px;top:85px;width:45px;height:36px;background:#d5ecc0"></div>
<div class="cal" style="left:269px;top:86px;width:45px;line-height:18px;color:#333">03<br>Sun.</div>
<div class="a" style="left:269px;top:85px;width:1px;height:36px;background:#222"></div>
<div class="cal" style="left:314px;top:86px;width:45px;line-height:18px;color:#333">04<br>Mon.</div>
<div class="cal" style="left:359px;top:86px;width:45px;line-height:18px;color:#333">05<br>Tue.</div>
<div class="a" style="left:359px;top:85px;width:1px;height:36px;background:#222"></div>
<div class="cal" style="left:404px;top:86px;width:45px;line-height:18px;color:#333">06<br>Wed.</div>
<div class="a" style="left:404px;top:85px;width:1px;height:36px;background:#222"></div>
<div class="cal" style="left:449px;top:86px;width:45px;line-height:18px;color:#333">07<br>Thu.</div>
<div class="a" style="left:449px;top:85px;width:1px;height:36px;background:#222"></div>
<div class="cal" style="left:494px;top:86px;width:45px;line-height:18px;color:#333">08<br>Fri.</div>
<div class="a" style="left:494px;top:85px;width:1px;height:36px;background:#222"></div>
<div class="a" style="left:540px;top:85px;width:45px;height:36px;background:#d5ecc0"></div>
<div class="cal" style="left:539px;top:86px;width:45px;line-height:18px;color:#333">09<br>Sat.</div>
<div class="a" style="left:539px;top:85px;width:1px;height:36px;background:#222"></div>
<div class="a" style="left:585px;top:85px;width:45px;height:36px;background:#d5ecc0"></div>
<div class="cal" style="left:584px;top:86px;width:45px;line-height:18px;color:#333">10<br>Sun.</div>
<div class="a" style="left:584px;top:85px;width:1px;height:36px;background:#222"></div>
<div class="cal" style="left:629px;top:86px;width:45px;line-height:18px;color:#333">11<br>Mon.</div>
<div class="cal" style="left:674px;top:86px;width:45px;line-height:18px;color:#333">12<br>Tue.</div>
<div class="a" style="left:674px;top:85px;width:1px;height:36px;background:#222"></div>
<div class="cal" style="left:719px;top:86px;width:45px;line-height:18px;color:#333">13<br>Wed.</div>
<div class="a" style="left:719px;top:85px;width:1px;height:36px;background:#222"></div>
<div class="cal" style="left:764px;top:86px;width:45px;line-height:18px;color:#333">14<br>Thu.</div>
<div class="a" style="left:764px;top:85px;width:1px;height:36px;background:#222"></div>
<div class="a" style="left:0;top:121px;width:810px;height:39px;background:#f0f520"></div>
<div class="a" style="left:0;top:121px;width:810px;height:1px;background:#6f7010"></div>
<div class="a" style="left:44px;top:121px;width:1px;height:39px;background:#6f7010;opacity:.35"></div>
<div class="a" style="left:89px;top:121px;width:1px;height:39px;background:#6f7010;opacity:.35"></div>
<div class="ln" style="left:89px;top:122px;width:45px;color:#000">32<br>480</div>
<div class="a" style="left:134px;top:121px;width:1px;height:39px;background:#6f7010;opacity:.35"></div>
<div class="ln" style="left:134px;top:122px;width:45px;color:#000">32<br>480</div>
<div class="a" style="left:179px;top:121px;width:1px;height:39px;background:#6f7010;opacity:.35"></div>
<div class="ln" style="left:179px;top:122px;width:45px;color:#000">32<br>480</div>
<div class="a" style="left:224px;top:121px;width:1px;height:39px;background:#6f7010;opacity:.35"></div>
<div class="ln" style="left:224px;top:122px;width:45px;color:#000">32<br>0</div>
<div class="a" style="left:269px;top:121px;width:1px;height:39px;background:#6f7010;opacity:.35"></div>
<div class="ln" style="left:269px;top:122px;width:45px;color:#000">32<br>0</div>
<div class="a" style="left:314px;top:121px;width:1px;height:39px;background:#6f7010;opacity:.35"></div>
<div class="ln" style="left:314px;top:122px;width:45px;color:#000">32<br>480</div>
<div class="a" style="left:359px;top:121px;width:1px;height:39px;background:#6f7010;opacity:.35"></div>
<div class="ln" style="left:359px;top:122px;width:45px;color:#000">32<br>480</div>
<div class="a" style="left:404px;top:121px;width:1px;height:39px;background:#6f7010;opacity:.35"></div>
<div class="ln" style="left:404px;top:122px;width:45px;color:#000">32<br>480</div>
<div class="a" style="left:449px;top:121px;width:1px;height:39px;background:#6f7010;opacity:.35"></div>
<div class="ln" style="left:449px;top:122px;width:45px;color:#000">32<br>480</div>
<div class="a" style="left:494px;top:121px;width:1px;height:39px;background:#6f7010;opacity:.35"></div>
<div class="ln" style="left:494px;top:122px;width:45px;color:#000">32<br>480</div>
<div class="a" style="left:539px;top:121px;width:1px;height:39px;background:#6f7010;opacity:.35"></div>
<div class="ln" style="left:539px;top:122px;width:45px;color:#000">32<br>0</div>
<div class="a" style="left:584px;top:121px;width:1px;height:39px;background:#6f7010;opacity:.35"></div>
<div class="ln" style="left:584px;top:122px;width:45px;color:#000">32<br>0</div>
<div class="a" style="left:629px;top:121px;width:1px;height:39px;background:#6f7010;opacity:.35"></div>
<div class="ln" style="left:629px;top:122px;width:45px;color:#000">32<br>480</div>
<div class="a" style="left:674px;top:121px;width:1px;height:39px;background:#6f7010;opacity:.35"></div>
<div class="ln" style="left:674px;top:122px;width:45px;color:#000">32<br>480</div>
<div class="a" style="left:719px;top:121px;width:1px;height:39px;background:#6f7010;opacity:.35"></div>
<div class="ln" style="left:719px;top:122px;width:45px;color:#000">32<br>480</div>
<div class="a" style="left:764px;top:121px;width:1px;height:39px;background:#6f7010;opacity:.35"></div>
<div class="ln" style="left:764px;top:122px;width:45px;color:#000">32<br>480</div>
<div class="a" style="left:0;top:164px;width:810px;height:35px;background:#e8e8e8"></div>
<div class="a" style="left:225px;top:164px;width:45px;height:35px;background:#c0c0c0"></div>
<div class="a" style="left:270px;top:164px;width:45px;height:35px;background:#c0c0c0"></div>
<div class="a" style="left:540px;top:164px;width:45px;height:35px;background:#c0c0c0"></div>
<div class="a" style="left:585px;top:164px;width:45px;height:35px;background:#c0c0c0"></div>
<div class="a" style="left:0;top:160px;width:810px;height:1px;background:#555"></div>
<div class="a" style="left:0;top:161px;width:810px;height:3px;background:#fcfcfc"></div>
<div class="a" style="left:44px;top:161px;width:0;height:38px;border-left:1px dotted #d4d4d4"></div>
<div class="a" style="left:89px;top:161px;width:0;height:38px;border-left:1px dotted #d4d4d4"></div>
<div class="a" style="left:134px;top:161px;width:0;height:38px;border-left:1px dotted #d4d4d4"></div>
<div class="a" style="left:179px;top:161px;width:0;height:38px;border-left:1px dotted #d4d4d4"></div>
<div class="a" style="left:224px;top:161px;width:0;height:38px;border-left:1px dotted #d4d4d4"></div>
<div class="a" style="left:269px;top:161px;width:0;height:38px;border-left:1px dotted #d4d4d4"></div>
<div class="a" style="left:314px;top:161px;width:0;height:38px;border-left:1px dotted #d4d4d4"></div>
<div class="a" style="left:359px;top:161px;width:0;height:38px;border-left:1px dotted #d4d4d4"></div>
<div class="a" style="left:404px;top:161px;width:0;height:38px;border-left:1px dotted #d4d4d4"></div>
<div class="a" style="left:449px;top:161px;width:0;height:38px;border-left:1px dotted #d4d4d4"></div>
<div class="a" style="left:494px;top:161px;width:0;height:38px;border-left:1px dotted #d4d4d4"></div>
<div class="a" style="left:539px;top:161px;width:0;height:38px;border-left:1px dotted #d4d4d4"></div>
<div class="a" style="left:584px;top:161px;width:0;height:38px;border-left:1px dotted #d4d4d4"></div>
<div class="a" style="left:629px;top:161px;width:0;height:38px;border-left:1px dotted #d4d4d4"></div>
<div class="a" style="left:674px;top:161px;width:0;height:38px;border-left:1px dotted #d4d4d4"></div>
<div class="a" style="left:719px;top:161px;width:0;height:38px;border-left:1px dotted #d4d4d4"></div>
<div class="a" style="left:764px;top:161px;width:0;height:38px;border-left:1px dotted #d4d4d4"></div>
<div class="bar" style="left:90px;top:166px;width:315px;background:#008000">
<div class="bn" style="left:0px">460</div>
<div class="bn" style="left:45px">480</div>
<div class="bn" style="left:90px">460</div>
<div class="bn" style="left:225px">480</div>
<div class="bn" style="left:270px">120</div>
</div>
<div class="a" style="left:0;top:203px;width:810px;height:35px;background:#e8e8e8"></div>
<div class="a" style="left:225px;top:203px;width:45px;height:35px;background:#c0c0c0"></div>
<div class="a" style="left:270px;top:203px;width:45px;height:35px;background:#c0c0c0"></div>
<div class="a" style="left:540px;top:203px;width:45px;height:35px;background:#c0c0c0"></div>
<div class="a" style="left:585px;top:203px;width:45px;height:35px;background:#c0c0c0"></div>
<div class="a" style="left:0;top:199px;width:810px;height:1px;background:#555"></div>
<div class="a" style="left:0;top:200px;width:810px;height:3px;background:#fcfcfc"></div>
<div class="a" style="left:44px;top:200px;width:0;height:38px;border-left:1px dotted #d4d4d4"></div>
<div class="a" style="left:89px;top:200px;width:0;height:38px;border-left:1px dotted #d4d4d4"></div>
<div class="a" style="left:134px;top:200px;width:0;height:38px;border-left:1px dotted #d4d4d4"></div>
<div class="a" style="left:179px;top:200px;width:0;height:38px;border-left:1px dotted #d4d4d4"></div>
<div class="a" style="left:224px;top:200px;width:0;height:38px;border-left:1px dotted #d4d4d4"></div>
<div class="a" style="left:269px;top:200px;width:0;height:38px;border-left:1px dotted #d4d4d4"></div>
<div class="a" style="left:314px;top:200px;width:0;height:38px;border-left:1px dotted #d4d4d4"></div>
<div class="a" style="left:359px;top:200px;width:0;height:38px;border-left:1px dotted #d4d4d4"></div>
<div class="a" style="left:404px;top:200px;width:0;height:38px;border-left:1px dotted #d4d4d4"></div>
<div class="a" style="left:449px;top:200px;width:0;height:38px;border-left:1px dotted #d4d4d4"></div>
<div class="a" style="left:494px;top:200px;width:0;height:38px;border-left:1px dotted #d4d4d4"></div>
<div class="a" style="left:539px;top:200px;width:0;height:38px;border-left:1px dotted #d4d4d4"></div>
<div class="a" style="left:584px;top:200px;width:0;height:38px;border-left:1px dotted #d4d4d4"></div>
<div class="a" style="left:629px;top:200px;width:0;height:38px;border-left:1px dotted #d4d4d4"></div>
<div class="a" style="left:674px;top:200px;width:0;height:38px;border-left:1px dotted #d4d4d4"></div>
<div class="a" style="left:719px;top:200px;width:0;height:38px;border-left:1px dotted #d4d4d4"></div>
<div class="a" style="left:764px;top:200px;width:0;height:38px;border-left:1px dotted #d4d4d4"></div>
<div class="bar" style="left:315px;top:205px;width:90px;background:#008000">
<div class="bn" style="left:45px">220</div>
</div>
<div class="a" style="left:0;top:242px;width:810px;height:35px;background:#e8e8e8"></div>
<div class="a" style="left:225px;top:242px;width:45px;height:35px;background:#c0c0c0"></div>
<div class="a" style="left:270px;top:242px;width:45px;height:35px;background:#c0c0c0"></div>
<div class="a" style="left:540px;top:242px;width:45px;height:35px;background:#c0c0c0"></div>
<div class="a" style="left:585px;top:242px;width:45px;height:35px;background:#c0c0c0"></div>
<div class="a" style="left:0;top:238px;width:810px;height:1px;background:#555"></div>
<div class="a" style="left:0;top:239px;width:810px;height:3px;background:#fcfcfc"></div>
<div class="a" style="left:44px;top:239px;width:0;height:38px;border-left:1px dotted #d4d4d4"></div>
<div class="a" style="left:89px;top:239px;width:0;height:38px;border-left:1px dotted #d4d4d4"></div>
<div class="a" style="left:134px;top:239px;width:0;height:38px;border-left:1px dotted #d4d4d4"></div>
<div class="a" style="left:179px;top:239px;width:0;height:38px;border-left:1px dotted #d4d4d4"></div>
<div class="a" style="left:224px;top:239px;width:0;height:38px;border-left:1px dotted #d4d4d4"></div>
<div class="a" style="left:269px;top:239px;width:0;height:38px;border-left:1px dotted #d4d4d4"></div>
<div class="a" style="left:314px;top:239px;width:0;height:38px;border-left:1px dotted #d4d4d4"></div>
<div class="a" style="left:359px;top:239px;width:0;height:38px;border-left:1px dotted #d4d4d4"></div>
<div class="a" style="left:404px;top:239px;width:0;height:38px;border-left:1px dotted #d4d4d4"></div>
<div class="a" style="left:449px;top:239px;width:0;height:38px;border-left:1px dotted #d4d4d4"></div>
<div class="a" style="left:494px;top:239px;width:0;height:38px;border-left:1px dotted #d4d4d4"></div>
<div class="a" style="left:539px;top:239px;width:0;height:38px;border-left:1px dotted #d4d4d4"></div>
<div class="a" style="left:584px;top:239px;width:0;height:38px;border-left:1px dotted #d4d4d4"></div>
<div class="a" style="left:629px;top:239px;width:0;height:38px;border-left:1px dotted #d4d4d4"></div>
<div class="a" style="left:674px;top:239px;width:0;height:38px;border-left:1px dotted #d4d4d4"></div>
<div class="a" style="left:719px;top:239px;width:0;height:38px;border-left:1px dotted #d4d4d4"></div>
<div class="a" style="left:764px;top:239px;width:0;height:38px;border-left:1px dotted #d4d4d4"></div>
<div class="bar" style="left:315px;top:244px;width:90px;background:#ff0000">
<div class="bn" style="left:45px">240</div>
</div>
<div class="a" style="left:0;top:281px;width:810px;height:35px;background:#e8e8e8"></div>
<div class="a" style="left:225px;top:281px;width:45px;height:35px;background:#c0c0c0"></div>
<div class="a" style="left:270px;top:281px;width:45px;height:35px;background:#c0c0c0"></div>
<div class="a" style="left:540px;top:281px;width:45px;height:35px;background:#c0c0c0"></div>
<div class="a" style="left:585px;top:281px;width:45px;height:35px;background:#c0c0c0"></div>
<div class="a" style="left:0;top:277px;width:810px;height:1px;background:#555"></div>
<div class="a" style="left:0;top:278px;width:810px;height:3px;background:#fcfcfc"></div>
<div class="a" style="left:44px;top:278px;width:0;height:38px;border-left:1px dotted #d4d4d4"></div>
<div class="a" style="left:89px;top:278px;width:0;height:38px;border-left:1px dotted #d4d4d4"></div>
<div class="a" style="left:134px;top:278px;width:0;height:38px;border-left:1px dotted #d4d4d4"></div>
<div class="a" style="left:179px;top:278px;width:0;height:38px;border-left:1px dotted #d4d4d4"></div>
<div class="a" style="left:224px;top:278px;width:0;height:38px;border-left:1px dotted #d4d4d4"></div>
<div class="a" style="left:269px;top:278px;width:0;height:38px;border-left:1px dotted #d4d4d4"></div>
<div class="a" style="left:314px;top:278px;width:0;height:38px;border-left:1px dotted #d4d4d4"></div>
<div class="a" style="left:359px;top:278px;width:0;height:38px;border-left:1px dotted #d4d4d4"></div>
<div class="a" style="left:404px;top:278px;width:0;height:38px;border-left:1px dotted #d4d4d4"></div>
<div class="a" style="left:449px;top:278px;width:0;height:38px;border-left:1px dotted #d4d4d4"></div>
<div class="a" style="left:494px;top:278px;width:0;height:38px;border-left:1px dotted #d4d4d4"></div>
<div class="a" style="left:539px;top:278px;width:0;height:38px;border-left:1px dotted #d4d4d4"></div>
<div class="a" style="left:584px;top:278px;width:0;height:38px;border-left:1px dotted #d4d4d4"></div>
<div class="a" style="left:629px;top:278px;width:0;height:38px;border-left:1px dotted #d4d4d4"></div>
<div class="a" style="left:674px;top:278px;width:0;height:38px;border-left:1px dotted #d4d4d4"></div>
<div class="a" style="left:719px;top:278px;width:0;height:38px;border-left:1px dotted #d4d4d4"></div>
<div class="a" style="left:764px;top:278px;width:0;height:38px;border-left:1px dotted #d4d4d4"></div>
<div class="bar" style="left:315px;top:283px;width:180px;background:#008000">
<div class="bn" style="left:45px">20</div>
<div class="bn" style="left:90px">580</div>
<div class="bn" style="left:135px">320</div>
</div>
<div class="a" style="left:0;top:316px;width:810px;height:39px;background:#4433f8"></div>
<div class="a" style="left:0;top:316px;width:810px;height:1px;background:#25188f"></div>
<div class="a" style="left:44px;top:316px;width:1px;height:39px;background:#25188f;opacity:.35"></div>
<div class="a" style="left:89px;top:316px;width:1px;height:39px;background:#25188f;opacity:.35"></div>
<div class="ln" style="left:89px;top:317px;width:45px;color:#fff">34<br>480</div>
<div class="a" style="left:134px;top:316px;width:1px;height:39px;background:#25188f;opacity:.35"></div>
<div class="ln" style="left:134px;top:317px;width:45px;color:#fff">34<br>480</div>
<div class="a" style="left:179px;top:316px;width:1px;height:39px;background:#25188f;opacity:.35"></div>
<div class="ln" style="left:179px;top:317px;width:45px;color:#fff">34<br>480</div>
<div class="a" style="left:224px;top:316px;width:1px;height:39px;background:#25188f;opacity:.35"></div>
<div class="ln" style="left:224px;top:317px;width:45px;color:#fff">34<br>0</div>
<div class="a" style="left:269px;top:316px;width:1px;height:39px;background:#25188f;opacity:.35"></div>
<div class="ln" style="left:269px;top:317px;width:45px;color:#fff">34<br>0</div>
<div class="a" style="left:314px;top:316px;width:1px;height:39px;background:#25188f;opacity:.35"></div>
<div class="ln" style="left:314px;top:317px;width:45px;color:#fff">34<br>480</div>
<div class="a" style="left:359px;top:316px;width:1px;height:39px;background:#25188f;opacity:.35"></div>
<div class="ln" style="left:359px;top:317px;width:45px;color:#fff">34<br>480</div>
<div class="a" style="left:404px;top:316px;width:1px;height:39px;background:#25188f;opacity:.35"></div>
<div class="ln" style="left:404px;top:317px;width:45px;color:#fff">34<br>480</div>
<div class="a" style="left:449px;top:316px;width:1px;height:39px;background:#25188f;opacity:.35"></div>
<div class="ln" style="left:449px;top:317px;width:45px;color:#fff">34<br>480</div>
<div class="a" style="left:494px;top:316px;width:1px;height:39px;background:#25188f;opacity:.35"></div>
<div class="ln" style="left:494px;top:317px;width:45px;color:#fff">34<br>480</div>
<div class="a" style="left:539px;top:316px;width:1px;height:39px;background:#25188f;opacity:.35"></div>
<div class="ln" style="left:539px;top:317px;width:45px;color:#fff">34<br>0</div>
<div class="a" style="left:584px;top:316px;width:1px;height:39px;background:#25188f;opacity:.35"></div>
<div class="ln" style="left:584px;top:317px;width:45px;color:#fff">34<br>0</div>
<div class="a" style="left:629px;top:316px;width:1px;height:39px;background:#25188f;opacity:.35"></div>
<div class="ln" style="left:629px;top:317px;width:45px;color:#fff">34<br>480</div>
<div class="a" style="left:674px;top:316px;width:1px;height:39px;background:#25188f;opacity:.35"></div>
<div class="ln" style="left:674px;top:317px;width:45px;color:#fff">34<br>480</div>
<div class="a" style="left:719px;top:316px;width:1px;height:39px;background:#25188f;opacity:.35"></div>
<div class="ln" style="left:719px;top:317px;width:45px;color:#fff">34<br>480</div>
<div class="a" style="left:764px;top:316px;width:1px;height:39px;background:#25188f;opacity:.35"></div>
<div class="ln" style="left:764px;top:317px;width:45px;color:#fff">34<br>480</div>
<div class="a" style="left:0;top:359px;width:810px;height:35px;background:#e8e8e8"></div>
<div class="a" style="left:225px;top:359px;width:45px;height:35px;background:#c0c0c0"></div>
<div class="a" style="left:270px;top:359px;width:45px;height:35px;background:#c0c0c0"></div>
<div class="a" style="left:540px;top:359px;width:45px;height:35px;background:#c0c0c0"></div>
<div class="a" style="left:585px;top:359px;width:45px;height:35px;background:#c0c0c0"></div>
<div class="a" style="left:0;top:398px;width:810px;height:35px;background:#e8e8e8"></div>
<div class="a" style="left:225px;top:398px;width:45px;height:35px;background:#c0c0c0"></div>
<div class="a" style="left:270px;top:398px;width:45px;height:35px;background:#c0c0c0"></div>
<div class="a" style="left:540px;top:398px;width:45px;height:35px;background:#c0c0c0"></div>
<div class="a" style="left:585px;top:398px;width:45px;height:35px;background:#c0c0c0"></div>
<div class="a" style="left:0;top:437px;width:810px;height:35px;background:#e8e8e8"></div>
<div class="a" style="left:225px;top:437px;width:45px;height:35px;background:#c0c0c0"></div>
<div class="a" style="left:270px;top:437px;width:45px;height:35px;background:#c0c0c0"></div>
<div class="a" style="left:540px;top:437px;width:45px;height:35px;background:#c0c0c0"></div>
<div class="a" style="left:585px;top:437px;width:45px;height:35px;background:#c0c0c0"></div>
<div class="a" style="left:0;top:476px;width:810px;height:35px;background:#e8e8e8"></div>
<div class="a" style="left:225px;top:476px;width:45px;height:35px;background:#c0c0c0"></div>
<div class="a" style="left:270px;top:476px;width:45px;height:35px;background:#c0c0c0"></div>
<div class="a" style="left:540px;top:476px;width:45px;height:35px;background:#c0c0c0"></div>
<div class="a" style="left:585px;top:476px;width:45px;height:35px;background:#c0c0c0"></div>
<div class="a" style="left:0;top:355px;width:810px;height:156px;overflow:hidden"><div class="a" style="left:-567.4px;top:-57px;font-size:205px;line-height:205px;letter-spacing:7.9px;color:rgba(30,60,30,.04);white-space:nowrap">Kontrollis</div></div>
<div class="a" style="left:0;top:355px;width:810px;height:1px;background:#555"></div>
<div class="a" style="left:0;top:356px;width:810px;height:3px;background:#fcfcfc"></div>
<div class="a" style="left:44px;top:356px;width:0;height:38px;border-left:1px dotted #d4d4d4"></div>
<div class="a" style="left:89px;top:356px;width:0;height:38px;border-left:1px dotted #d4d4d4"></div>
<div class="a" style="left:134px;top:356px;width:0;height:38px;border-left:1px dotted #d4d4d4"></div>
<div class="a" style="left:179px;top:356px;width:0;height:38px;border-left:1px dotted #d4d4d4"></div>
<div class="a" style="left:224px;top:356px;width:0;height:38px;border-left:1px dotted #d4d4d4"></div>
<div class="a" style="left:269px;top:356px;width:0;height:38px;border-left:1px dotted #d4d4d4"></div>
<div class="a" style="left:314px;top:356px;width:0;height:38px;border-left:1px dotted #d4d4d4"></div>
<div class="a" style="left:359px;top:356px;width:0;height:38px;border-left:1px dotted #d4d4d4"></div>
<div class="a" style="left:404px;top:356px;width:0;height:38px;border-left:1px dotted #d4d4d4"></div>
<div class="a" style="left:449px;top:356px;width:0;height:38px;border-left:1px dotted #d4d4d4"></div>
<div class="a" style="left:494px;top:356px;width:0;height:38px;border-left:1px dotted #d4d4d4"></div>
<div class="a" style="left:539px;top:356px;width:0;height:38px;border-left:1px dotted #d4d4d4"></div>
<div class="a" style="left:584px;top:356px;width:0;height:38px;border-left:1px dotted #d4d4d4"></div>
<div class="a" style="left:629px;top:356px;width:0;height:38px;border-left:1px dotted #d4d4d4"></div>
<div class="a" style="left:674px;top:356px;width:0;height:38px;border-left:1px dotted #d4d4d4"></div>
<div class="a" style="left:719px;top:356px;width:0;height:38px;border-left:1px dotted #d4d4d4"></div>
<div class="a" style="left:764px;top:356px;width:0;height:38px;border-left:1px dotted #d4d4d4"></div>
<div class="bar" style="left:90px;top:361px;width:90px;background:#008000">
<div class="bn" style="left:0px">1980</div>
<div class="bn" style="left:45px">180</div>
</div>
<div class="a" style="left:0;top:394px;width:810px;height:1px;background:#555"></div>
<div class="a" style="left:0;top:395px;width:810px;height:3px;background:#fcfcfc"></div>
<div class="a" style="left:44px;top:395px;width:0;height:38px;border-left:1px dotted #d4d4d4"></div>
<div class="a" style="left:89px;top:395px;width:0;height:38px;border-left:1px dotted #d4d4d4"></div>
<div class="a" style="left:134px;top:395px;width:0;height:38px;border-left:1px dotted #d4d4d4"></div>
<div class="a" style="left:179px;top:395px;width:0;height:38px;border-left:1px dotted #d4d4d4"></div>
<div class="a" style="left:224px;top:395px;width:0;height:38px;border-left:1px dotted #d4d4d4"></div>
<div class="a" style="left:269px;top:395px;width:0;height:38px;border-left:1px dotted #d4d4d4"></div>
<div class="a" style="left:314px;top:395px;width:0;height:38px;border-left:1px dotted #d4d4d4"></div>
<div class="a" style="left:359px;top:395px;width:0;height:38px;border-left:1px dotted #d4d4d4"></div>
<div class="a" style="left:404px;top:395px;width:0;height:38px;border-left:1px dotted #d4d4d4"></div>
<div class="a" style="left:449px;top:395px;width:0;height:38px;border-left:1px dotted #d4d4d4"></div>
<div class="a" style="left:494px;top:395px;width:0;height:38px;border-left:1px dotted #d4d4d4"></div>
<div class="a" style="left:539px;top:395px;width:0;height:38px;border-left:1px dotted #d4d4d4"></div>
<div class="a" style="left:584px;top:395px;width:0;height:38px;border-left:1px dotted #d4d4d4"></div>
<div class="a" style="left:629px;top:395px;width:0;height:38px;border-left:1px dotted #d4d4d4"></div>
<div class="a" style="left:674px;top:395px;width:0;height:38px;border-left:1px dotted #d4d4d4"></div>
<div class="a" style="left:719px;top:395px;width:0;height:38px;border-left:1px dotted #d4d4d4"></div>
<div class="a" style="left:764px;top:395px;width:0;height:38px;border-left:1px dotted #d4d4d4"></div>
<div class="bar" style="left:135px;top:400px;width:270px;background:#008000">
<div class="bn" style="left:0px">1820</div>
<div class="bn" style="left:45px">2000</div>
<div class="bn" style="left:180px">1980</div>
<div class="bn" style="left:225px">1600</div>
</div>
<div class="a" style="left:0;top:433px;width:810px;height:1px;background:#555"></div>
<div class="a" style="left:0;top:434px;width:810px;height:3px;background:#fcfcfc"></div>
<div class="a" style="left:44px;top:434px;width:0;height:38px;border-left:1px dotted #d4d4d4"></div>
<div class="a" style="left:89px;top:434px;width:0;height:38px;border-left:1px dotted #d4d4d4"></div>
<div class="a" style="left:134px;top:434px;width:0;height:38px;border-left:1px dotted #d4d4d4"></div>
<div class="a" style="left:179px;top:434px;width:0;height:38px;border-left:1px dotted #d4d4d4"></div>
<div class="a" style="left:224px;top:434px;width:0;height:38px;border-left:1px dotted #d4d4d4"></div>
<div class="a" style="left:269px;top:434px;width:0;height:38px;border-left:1px dotted #d4d4d4"></div>
<div class="a" style="left:314px;top:434px;width:0;height:38px;border-left:1px dotted #d4d4d4"></div>
<div class="a" style="left:359px;top:434px;width:0;height:38px;border-left:1px dotted #d4d4d4"></div>
<div class="a" style="left:404px;top:434px;width:0;height:38px;border-left:1px dotted #d4d4d4"></div>
<div class="a" style="left:449px;top:434px;width:0;height:38px;border-left:1px dotted #d4d4d4"></div>
<div class="a" style="left:494px;top:434px;width:0;height:38px;border-left:1px dotted #d4d4d4"></div>
<div class="a" style="left:539px;top:434px;width:0;height:38px;border-left:1px dotted #d4d4d4"></div>
<div class="a" style="left:584px;top:434px;width:0;height:38px;border-left:1px dotted #d4d4d4"></div>
<div class="a" style="left:629px;top:434px;width:0;height:38px;border-left:1px dotted #d4d4d4"></div>
<div class="a" style="left:674px;top:434px;width:0;height:38px;border-left:1px dotted #d4d4d4"></div>
<div class="a" style="left:719px;top:434px;width:0;height:38px;border-left:1px dotted #d4d4d4"></div>
<div class="a" style="left:764px;top:434px;width:0;height:38px;border-left:1px dotted #d4d4d4"></div>
<div class="bar" style="left:360px;top:439px;width:90px;background:#008000">
<div class="bn" style="left:0px">420</div>
<div class="bn" style="left:45px">300</div>
</div>
<div class="a" style="left:0;top:472px;width:810px;height:1px;background:#555"></div>
<div class="a" style="left:0;top:473px;width:810px;height:3px;background:#fcfcfc"></div>
<div class="a" style="left:44px;top:473px;width:0;height:38px;border-left:1px dotted #d4d4d4"></div>
<div class="a" style="left:89px;top:473px;width:0;height:38px;border-left:1px dotted #d4d4d4"></div>
<div class="a" style="left:134px;top:473px;width:0;height:38px;border-left:1px dotted #d4d4d4"></div>
<div class="a" style="left:179px;top:473px;width:0;height:38px;border-left:1px dotted #d4d4d4"></div>
<div class="a" style="left:224px;top:473px;width:0;height:38px;border-left:1px dotted #d4d4d4"></div>
<div class="a" style="left:269px;top:473px;width:0;height:38px;border-left:1px dotted #d4d4d4"></div>
<div class="a" style="left:314px;top:473px;width:0;height:38px;border-left:1px dotted #d4d4d4"></div>
<div class="a" style="left:359px;top:473px;width:0;height:38px;border-left:1px dotted #d4d4d4"></div>
<div class="a" style="left:404px;top:473px;width:0;height:38px;border-left:1px dotted #d4d4d4"></div>
<div class="a" style="left:449px;top:473px;width:0;height:38px;border-left:1px dotted #d4d4d4"></div>
<div class="a" style="left:494px;top:473px;width:0;height:38px;border-left:1px dotted #d4d4d4"></div>
<div class="a" style="left:539px;top:473px;width:0;height:38px;border-left:1px dotted #d4d4d4"></div>
<div class="a" style="left:584px;top:473px;width:0;height:38px;border-left:1px dotted #d4d4d4"></div>
<div class="a" style="left:629px;top:473px;width:0;height:38px;border-left:1px dotted #d4d4d4"></div>
<div class="a" style="left:674px;top:473px;width:0;height:38px;border-left:1px dotted #d4d4d4"></div>
<div class="a" style="left:719px;top:473px;width:0;height:38px;border-left:1px dotted #d4d4d4"></div>
<div class="a" style="left:764px;top:473px;width:0;height:38px;border-left:1px dotted #d4d4d4"></div>
<div class="bar" style="left:360px;top:478px;width:90px;background:#008000">
<div class="bn" style="left:45px">140</div>
</div>
<div class="a" style="left:0;top:511px;width:810px;height:39px;background:#8fa3fc"></div>
<div class="a" style="left:0;top:511px;width:810px;height:1px;background:#3a4570"></div>
<div class="a" style="left:44px;top:511px;width:1px;height:39px;background:#3a4570;opacity:.35"></div>
<div class="a" style="left:89px;top:511px;width:1px;height:39px;background:#3a4570;opacity:.35"></div>
<div class="ln" style="left:89px;top:512px;width:45px;color:#000">32<br>480</div>
<div class="a" style="left:134px;top:511px;width:1px;height:39px;background:#3a4570;opacity:.35"></div>
<div class="ln" style="left:134px;top:512px;width:45px;color:#000">32<br>480</div>
<div class="a" style="left:179px;top:511px;width:1px;height:39px;background:#3a4570;opacity:.35"></div>
<div class="ln" style="left:179px;top:512px;width:45px;color:#000">32<br>480</div>
<div class="a" style="left:224px;top:511px;width:1px;height:39px;background:#3a4570;opacity:.35"></div>
<div class="ln" style="left:224px;top:512px;width:45px;color:#000">32<br>0</div>
<div class="a" style="left:269px;top:511px;width:1px;height:39px;background:#3a4570;opacity:.35"></div>
<div class="ln" style="left:269px;top:512px;width:45px;color:#000">32<br>0</div>
<div class="a" style="left:314px;top:511px;width:1px;height:39px;background:#3a4570;opacity:.35"></div>
<div class="ln" style="left:314px;top:512px;width:45px;color:#000">32<br>480</div>
<div class="a" style="left:359px;top:511px;width:1px;height:39px;background:#3a4570;opacity:.35"></div>
<div class="ln" style="left:359px;top:512px;width:45px;color:#000">32<br>480</div>
<div class="a" style="left:404px;top:511px;width:1px;height:39px;background:#3a4570;opacity:.35"></div>
<div class="ln" style="left:404px;top:512px;width:45px;color:#000">32<br>480</div>
<div class="a" style="left:449px;top:511px;width:1px;height:39px;background:#3a4570;opacity:.35"></div>
<div class="ln" style="left:449px;top:512px;width:45px;color:#000">32<br>480</div>
<div class="a" style="left:494px;top:511px;width:1px;height:39px;background:#3a4570;opacity:.35"></div>
<div class="ln" style="left:494px;top:512px;width:45px;color:#000">32<br>480</div>
<div class="a" style="left:539px;top:511px;width:1px;height:39px;background:#3a4570;opacity:.35"></div>
<div class="ln" style="left:539px;top:512px;width:45px;color:#000">32<br>0</div>
<div class="a" style="left:584px;top:511px;width:1px;height:39px;background:#3a4570;opacity:.35"></div>
<div class="ln" style="left:584px;top:512px;width:45px;color:#000">32<br>0</div>
<div class="a" style="left:629px;top:511px;width:1px;height:39px;background:#3a4570;opacity:.35"></div>
<div class="ln" style="left:629px;top:512px;width:45px;color:#000">32<br>480</div>
<div class="a" style="left:674px;top:511px;width:1px;height:39px;background:#3a4570;opacity:.35"></div>
<div class="ln" style="left:674px;top:512px;width:45px;color:#000">32<br>480</div>
<div class="a" style="left:719px;top:511px;width:1px;height:39px;background:#3a4570;opacity:.35"></div>
<div class="ln" style="left:719px;top:512px;width:45px;color:#000">32<br>480</div>
<div class="a" style="left:764px;top:511px;width:1px;height:39px;background:#3a4570;opacity:.35"></div>
<div class="ln" style="left:764px;top:512px;width:45px;color:#000">32<br>480</div>
<div class="a" style="left:0;top:550px;width:810px;height:1px;background:#666"></div>
<div class="a" style="left:0;top:551px;width:810px;height:9px;background:#fff"></div>
<div class="a" style="left:44px;top:551px;width:1px;height:9px;background:#ddd"></div>
<div class="a" style="left:89px;top:551px;width:1px;height:9px;background:#ddd"></div>
<div class="a" style="left:134px;top:551px;width:1px;height:9px;background:#ddd"></div>
<div class="a" style="left:179px;top:551px;width:1px;height:9px;background:#ddd"></div>
<div class="a" style="left:224px;top:551px;width:1px;height:9px;background:#ddd"></div>
<div class="a" style="left:269px;top:551px;width:1px;height:9px;background:#ddd"></div>
<div class="a" style="left:314px;top:551px;width:1px;height:9px;background:#ddd"></div>
<div class="a" style="left:359px;top:551px;width:1px;height:9px;background:#ddd"></div>
<div class="a" style="left:404px;top:551px;width:1px;height:9px;background:#ddd"></div>
<div class="a" style="left:449px;top:551px;width:1px;height:9px;background:#ddd"></div>
<div class="a" style="left:494px;top:551px;width:1px;height:9px;background:#ddd"></div>
<div class="a" style="left:539px;top:551px;width:1px;height:9px;background:#ddd"></div>
<div class="a" style="left:584px;top:551px;width:1px;height:9px;background:#ddd"></div>
<div class="a" style="left:629px;top:551px;width:1px;height:9px;background:#ddd"></div>
<div class="a" style="left:674px;top:551px;width:1px;height:9px;background:#ddd"></div>
<div class="a" style="left:719px;top:551px;width:1px;height:9px;background:#ddd"></div>
<div class="a" style="left:764px;top:551px;width:1px;height:9px;background:#ddd"></div>
</div>
<div class="vl" style="left:1888px;top:253px;height:560px"></div>
<div class="a" style="left:0;top:878px;width:1920px;height:1px;background:#f2eaf2"></div>
<div class="a" style="left:0;top:879px;width:1920px;height:1px;background:#5cb848"></div>
</body></html>
